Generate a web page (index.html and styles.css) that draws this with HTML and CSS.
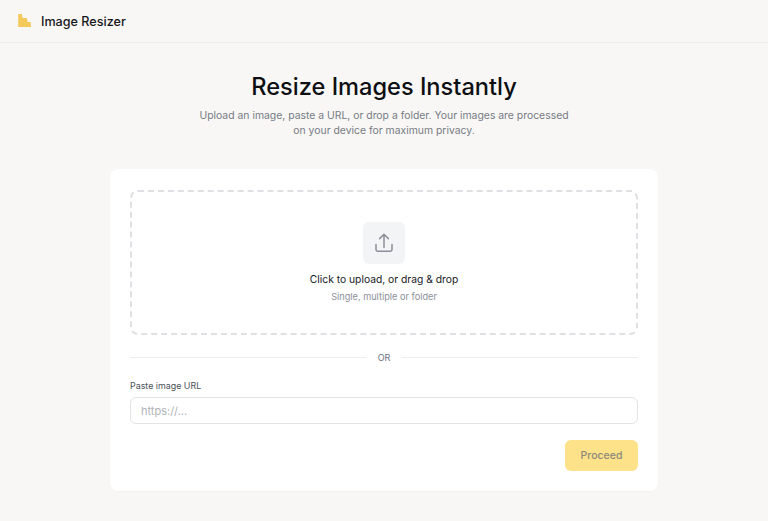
FILE: index.html
```html
<!DOCTYPE html>
<html lang="en">
<head>
<meta charset="utf-8">
<title>Image Resizer</title>
<link rel="stylesheet" href="styles.css">
</head>
<body>
<header class="topbar">
  <svg class="logo" width="14" height="14" viewBox="0 0 14 14"><path d="M0.2 1H4L4.5 5H9L9.500 9H12.600L13 14H0.200Z" fill="#f5c95c"/></svg>
  <span class="brand">Image Resizer</span>
</header>
<main class="main">
  <h1 class="title">Resize Images Instantly</h1>
  <p class="subtitle">Upload an image, paste a URL, or drop a folder. Your images are processed<br>on your device for maximum privacy.</p>
  <section class="card">
    <div class="dropzone">
      <div class="upload-icon">
        <svg width="20" height="20" viewBox="0 0 20 20" fill="none" stroke="#8b8f99" stroke-width="1.5" stroke-linecap="round" stroke-linejoin="round"><path d="M10 14.500V1.500M5.600 5.600L10 1.200L14.400 5.600"/><path d="M2 11.500V16.500Q2 18.200 3.700 18.200H16.300Q18 18.200 18 16.500V11.500"/></svg>
      </div>
      <div class="drop-title">Click to upload, or drag &amp; drop</div>
      <div class="drop-hint">Single, multiple or folder</div>
    </div>
    <div class="divider"><span class="line"></span><span class="or">OR</span><span class="line"></span></div>
    <label class="label" for="url">Paste image URL</label>
    <input class="input" id="url" type="text" placeholder="https://...">
    <div class="actions"><button class="proceed" type="button">Proceed</button></div>
  </section>
</main>
</body>
</html>
```
FILE: styles.css
```css
* { box-sizing: border-box; }
html, body { margin: 0; padding: 0; }
body {
  background: #f8f7f5;
  font-family: Inter, "Liberation Sans", sans-serif;
  color: #0f1115;
  height: 521px;
  overflow: hidden;
}
.topbar {
  height: 43px;
  display: flex;
  align-items: center;
  gap: 9px;
  padding: 0 18px;
  border-bottom: 1px solid #eeedeb;
}
.logo { flex: none; margin-top: -2px; }
.brand { font-size: 12.6px; font-weight: 500; color: #17181c; }
.main { display: flex; flex-direction: column; align-items: center; padding-top: 28px; }
.title { margin: 0; font-size: 23.6px; line-height: 32px; font-weight: 500; color: #0d0f13; }
.subtitle { margin: 5px 0 0; font-size: 10.4px; line-height: 15px; text-align: center; color: #777b84; }
.card {
  width: 548px;
  height: 322px;
  margin-top: 31px;
  padding: 21px 20px 20px;
  background: #fff;
  border-radius: 8px;
  box-shadow: 0 1px 2px rgba(0,0,0,.03);
  display: flex;
  flex-direction: column;
}
.dropzone {
  height: 145px;
  border: 2px dashed #dfe0e3;
  border-radius: 8px;
  display: flex;
  flex-direction: column;
  align-items: center;
  padding-top: 30px;
}
.upload-icon {
  width: 42px; height: 42px;
  background: #f3f4f6;
  border-radius: 6px;
  display: flex; align-items: center; justify-content: center;
}
.drop-title { margin-top: 7px; font-size: 10.3px; line-height: 16px; font-weight: 400; color: #16181d; }
.drop-hint { margin-top: 1px; font-size: 9.2px; line-height: 17px; color: #8b8f99; }
.divider { display: flex; align-items: center; gap: 10.5px; margin-top: 14px; height: 16px; }
.line { flex: 1; height: 1px; background: #ecedef; }
.or { font-size: 9px; color: #6b7280; }
.label { margin-top: 14px; font-size: 8.9px; line-height: 14px; font-weight: 400; color: #4b5058; }
.input {
  margin-top: 4px;
  height: 27px;
  width: 100%;
  border: 1px solid #e3e4e7;
  border-radius: 6px;
  padding: 0 10px;
  font: 11px Inter, "Liberation Sans", sans-serif;
  background: #fff;
  outline: none;
}
.input::placeholder { color: #b0b3b9; opacity: 1; }
.actions { display: flex; justify-content: flex-end; margin-top: 16px; }
.proceed {
  width: 73px; height: 31px;
  border: 0;
  border-radius: 6px;
  background: #fde28a;
  color: #8c8878;
  font: 500 10.5px Inter, "Liberation Sans", sans-serif;
}
```
